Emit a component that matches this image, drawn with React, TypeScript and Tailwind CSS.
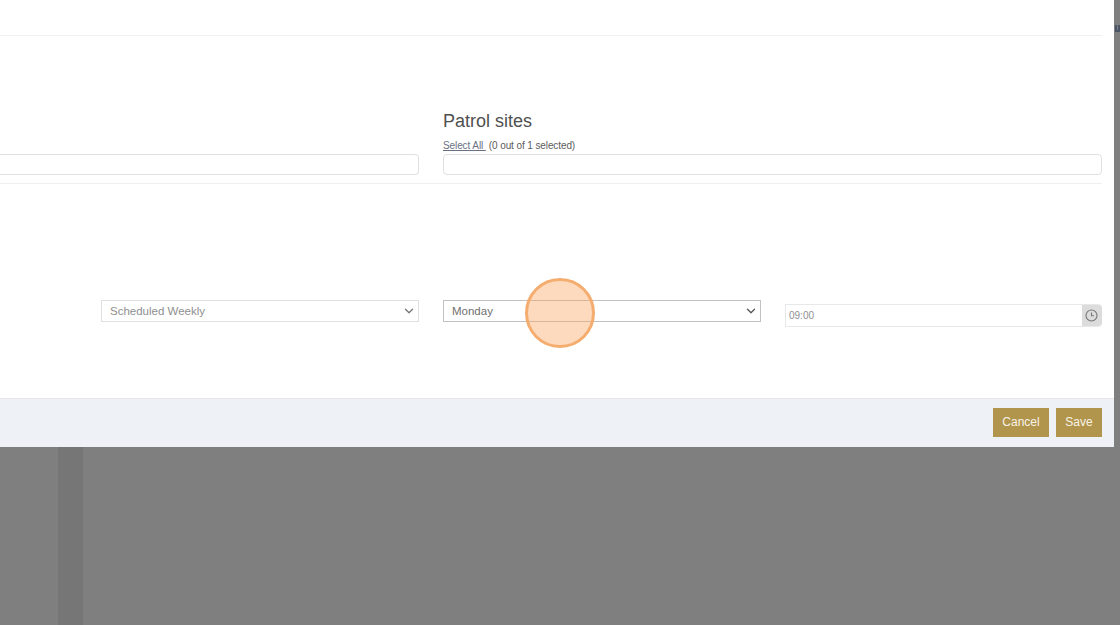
import React from "react";
import { ChevronDown } from "lucide-react";

const SelectBox = ({ value, dark }: { value: string; dark?: boolean }) => (
  <div
    className={`flex h-[22px] items-center justify-between border pl-2 pr-[2px] text-[11.5px] ${
      dark ? "border-[#c2c2c2] text-[#707070]" : "border-[#e0e0e0] text-[#8f8f8f]"
    }`}
  >
    <span className="pt-[2px]">{value}</span>
    <ChevronDown size={14} strokeWidth={2.25} className={dark ? "text-[#555]" : "text-[#777]"} />
  </div>
);

const ClockIcon = () => (
  <svg width="13" height="13" viewBox="0 0 13 13" fill="none" stroke="#777" strokeWidth="1.1">
    <circle cx="6.5" cy="6.5" r="5.5" />
    <path d="M6.5 3.5v3.2h2.4" />
  </svg>
);

export default function App() {
  return (
    <div className="relative h-[625px] w-[1120px] overflow-hidden bg-[#7f7f7f] font-['Liberation_Sans',Arial,sans-serif]">
      {/* modal */}
      <div className="flex h-[447px] w-[1114px] flex-col bg-white">
        <div className="mr-3 h-[36px] shrink-0 border-b border-[#f0f0f0]" />

        <div className="mr-3 flex h-[148px] shrink-0 items-end gap-6 border-b border-[#f0f0f0] pb-2">
          <div className="h-[21px] w-[419px] rounded-r border border-l-0 border-[#e0e0e0]" />
          <div className="flex-1">
            <h2 className="text-[18px] leading-[22px] text-[#505050]">Patrol sites</h2>
            <div className="mt-[6px] flex h-[14px] items-center text-[10px] tracking-[-0.1px] text-[#5c5c5c]">
              <span className="text-[#6a7083] underline">Select All&nbsp;</span>
              <span className="ml-[3px]">(0 out of 1 selected)</span>
            </div>
            <div className="mt-[2px] h-[21px] rounded border border-[#e0e0e0]" />
          </div>
        </div>

        <div className="flex flex-1 items-start pl-[101px] pr-3 pt-[116px]">
          <div className="grid w-full grid-cols-[318px_318px_1fr] gap-6">
            <SelectBox value="Scheduled Weekly" />
            <SelectBox value="Monday" dark />
            <div className="mt-1 flex h-[23px] overflow-hidden rounded-r border border-r-0 border-[#e8e8e8]">
              <div className="flex flex-1 items-center pl-[3px] text-[10px] text-[#8f8f8f]">09:00</div>
              <div className="flex w-5 items-center justify-center bg-[#dcdcdc] pr-px">
                <ClockIcon />
              </div>
            </div>
          </div>
        </div>

        <div className="flex h-[49px] shrink-0 items-center justify-end gap-[7px] border-t border-[#e6e6e6] bg-[#eef1f6] pb-[2px] pr-3">
          <button className="h-[29px] w-[56px] bg-[#b2954c] text-[12px] text-[#f7f3e8]">Cancel</button>
          <button className="h-[29px] w-[46px] bg-[#b2954c] text-[12px] text-[#f7f3e8]">Save</button>
        </div>
      </div>

      {/* page behind the modal */}
      <div className="absolute left-[58px] top-[447px] h-[178px] w-[25px] bg-[#767676]" />
      <div className="absolute left-[1115px] top-[25px] h-[7px] w-[5px] border-x-2 border-b-2 border-[#4a5568]" />

      {/* click highlight */}
      <div className="absolute left-[525px] top-[278px] h-[70px] w-[70px] rounded-full border-[3px] border-[#f5ad6f] bg-[#f9a15a]/40" />
    </div>
  );
}
